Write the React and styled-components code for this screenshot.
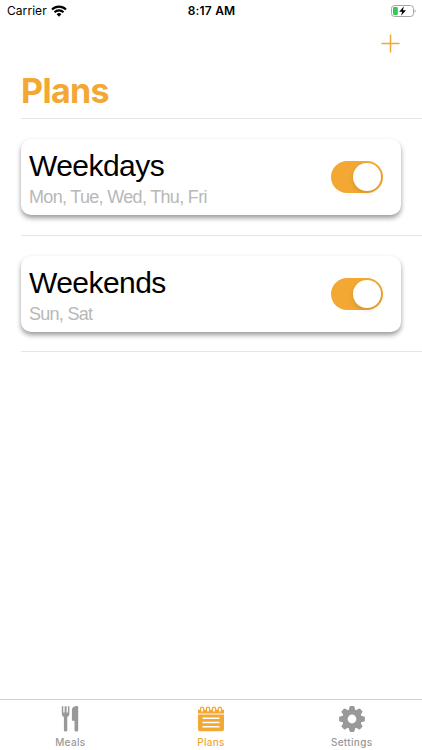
import React, { useState } from 'react';
import styled, { createGlobalStyle } from 'styled-components';

const ORANGE = '#f2a833';
const GREY = '#999999';

const GlobalStyle = createGlobalStyle`
  * { box-sizing: border-box; }
  body { margin: 0; background: #fff; }
`;

const Screen = styled.div`
  display: flex;
  flex-direction: column;
  width: 422px;
  height: 750px;
  overflow: hidden;
  background: #fff;
  font-family: Inter, 'Liberation Sans', sans-serif;
`;

const StatusBar = styled.header`
  display: grid;
  grid-template-columns: 1fr auto 1fr;
  align-items: center;
  height: 22px;
  padding: 0 6px 0 7px;
  color: #000;
`;

const Carrier = styled.div`
  display: flex;
  align-items: center;
  gap: 4px;
  font-size: 12px;
  line-height: 22px;
  letter-spacing: 0.06px;
`;

const Clock = styled.div`
  font-size: 12px;
  font-weight: 600;
  line-height: 22px;
  letter-spacing: 0.2px;
`;

const BatterySlot = styled.div`
  display: flex;
  justify-content: flex-end;
`;

const NavBar = styled.nav`
  display: flex;
  align-items: center;
  justify-content: flex-end;
  height: 43px;
  padding-right: 22px;
`;

const AddButton = styled.button`
  display: flex;
  padding: 0;
  border: 0;
  background: none;
`;

const Title = styled.h1`
  height: 54px;
  margin: 0 0 0 21px;
  border-bottom: 1px solid #e6e6e6;
  color: ${ORANGE};
  font-size: 34px;
  font-weight: 700;
  line-height: 51px;
  letter-spacing: -0.65px;
`;

const PlanList = styled.main`
  flex: 1;
  padding-left: 21px;
`;

const PlanRow = styled.section`
  height: 116.5px;
  padding: 20px 21px 20px 0;
  border-bottom: 1px solid #e6e6e6;
`;

const PlanCard = styled.div`
  display: flex;
  align-items: center;
  justify-content: space-between;
  height: 76px;
  padding: 0 18px 0 8px;
  border-radius: 10px;
  background: #fff;
  box-shadow: 0 3px 5px rgba(0, 0, 0, 0.4);
`;

const PlanText = styled.div`
  display: flex;
  flex-direction: column;
  padding-top: 6px;
  font-family: 'Liberation Sans', Arial, sans-serif;
  white-space: nowrap;
`;

const PlanName = styled.div`
  color: #000;
  font-size: 30px;
  line-height: 34px;
  letter-spacing: -0.55px;
`;

const PlanDays = styled.div`
  color: #b8b8b8;
  font-size: 18px;
  line-height: 28px;
  letter-spacing: ${(p) => p.$tracking};
`;

const Toggle = styled.button`
  display: flex;
  align-items: center;
  justify-content: ${(p) => (p.$on ? 'flex-end' : 'flex-start')};
  width: 52px;
  height: 32px;
  padding: 2px;
  border: 0;
  border-radius: 16px;
  background: ${(p) => (p.$on ? ORANGE : '#e5e5ea')};
`;

const Knob = styled.span`
  width: 28px;
  height: 28px;
  border-radius: 50%;
  background: #fff;
  box-shadow: 0 2px 5px rgba(0, 0, 0, 0.12);
`;

const TabBar = styled.footer`
  display: grid;
  grid-template-columns: repeat(3, 1fr);
  height: 51px;
  border-top: 1px solid #cfcfcf;
`;

const Tab = styled.button`
  display: flex;
  flex-direction: column;
  align-items: center;
  gap: 3px;
  padding: 6px 0 0;
  border: 0;
  background: none;
  color: ${(p) => (p.$active ? ORANGE : GREY)};
  font-family: inherit;
  font-size: 10px;
  font-weight: 500;
  line-height: 14px;
  letter-spacing: 0.32px;
`;

const WifiIcon = () => (
  <svg width="16" height="12" viewBox="0 0 16 12">
    <g fill="none" stroke="#000" strokeWidth="2.1">
      <path d="M1 4.5a10 10 0 0 1 14 0" />
      <path d="M3.5 7.2a6.4 6.4 0 0 1 9 0" />
    </g>
    <path d="M8 11.7 5.6 9.2a3.5 3.5 0 0 1 4.8 0z" />
  </svg>
);

const BatteryIcon = () => (
  <svg width="25" height="12" viewBox="0 0 25 12">
    <rect x=".5" y=".5" width="22" height="11" rx="3" fill="none" stroke="#a6a6a6" />
    <path d="M23.6 4.2v3.6q1.1-.5 1.1-1.8t-1.1-1.8" fill="#a6a6a6" />
    <rect x="2" y="2" width="4.8" height="8" rx="1.2" fill="#34c759" />
    <path d="M13 1.2 8.2 6.8h3l-1.2 4L15 5.2h-3.1z" stroke="#fff" strokeWidth="1.2" paintOrder="stroke" />
  </svg>
);

const PlusIcon = () => (
  <svg width="19" height="19" viewBox="0 0 19 19" stroke={ORANGE} strokeWidth="1.5">
    <path d="M9.5 .5v18M.5 9.5h18" />
  </svg>
);

const MealsIcon = () => (
  <svg width="26" height="26" viewBox="0 0 26 26" fill="currentColor">
    <path d="M4.8.3h1.5v6.2h1.3V.3h2v6.2h1.3V.3h1.5v7.2c0 2-.8 2.7-2.1 3.6v12.8c0 2-3.4 2-3.4 0V11.1C5.6 10.2 4.8 9.5 4.8 7.5z" />
    <path d="M21.2 1v22.9c0 2.1-3.7 2.1-3.7 0v-9.2h-2.6V4c0-2.6 2.3-3.9 5.3-3.9q1 0 1 .9z" />
  </svg>
);

const PlansIcon = () => (
  <svg width="26" height="26" viewBox="0 0 26 26">
    <path d="M0 3.7h26v3.9H0zM0 8.4h26v14.8a2 2 0 0 1-2 2H2a2 2 0 0 1-2-2z" fill="currentColor" />
    <g fill="#fff" stroke="currentColor" strokeWidth="1.3">
      <rect x="2.6" y="1.1" width="3" height="5.1" rx="1.5" />
      <rect x="8.5" y="1.1" width="3" height="5.1" rx="1.5" />
      <rect x="14.5" y="1.1" width="3" height="5.1" rx="1.5" />
      <rect x="20.4" y="1.1" width="3" height="5.1" rx="1.5" />
    </g>
    <path d="M4.5 12.3h17M4.5 16.5h17M4.5 20.7h17" stroke="#fff" strokeWidth="1.5" />
  </svg>
);

const SettingsIcon = () => (
  <svg width="26" height="26" viewBox="0 0 26 26" fill="currentColor">
    <path
      fillRule="evenodd"
      d="M13 3.2a9.8 9.8 0 1 0 0 19.6 9.8 9.8 0 0 0 0-19.6zm0 5.4a4.4 4.4 0 1 1 0 8.8 4.4 4.4 0 0 1 0-8.8z"
    />
    {[0, 45, 90, 135, 180, 225, 270, 315].map((angle) => (
      <path key={angle} transform={`rotate(${angle} 13 13)`} d="M9.5 5 10.5.9q.2-.8 1-.8h3q.8 0 1 .8L16.5 5z" />
    ))}
  </svg>
);

const PLANS = [
  { name: 'Weekdays', days: 'Mon, Tue, Wed, Thu, Fri', daysTracking: '-0.68px' },
  { name: 'Weekends', days: 'Sun, Sat', daysTracking: '-0.72px' },
];

const TABS = [
  { label: 'Meals', Icon: MealsIcon },
  { label: 'Plans', Icon: PlansIcon },
  { label: 'Settings', Icon: SettingsIcon },
];

function Plan({ plan }) {
  const [on, setOn] = useState(true);
  return (
    <PlanRow>
      <PlanCard>
        <PlanText>
          <PlanName>{plan.name}</PlanName>
          <PlanDays $tracking={plan.daysTracking}>{plan.days}</PlanDays>
        </PlanText>
        <Toggle $on={on} role="switch" aria-checked={on} aria-label={plan.name} onClick={() => setOn(!on)}>
          <Knob />
        </Toggle>
      </PlanCard>
    </PlanRow>
  );
}

export default function App() {
  const [active, setActive] = useState('Plans');
  return (
    <>
      <GlobalStyle />
      <Screen>
        <StatusBar>
          <Carrier>
            Carrier
            <WifiIcon />
          </Carrier>
          <Clock>8:17 AM</Clock>
          <BatterySlot>
            <BatteryIcon />
          </BatterySlot>
        </StatusBar>
        <NavBar>
          <AddButton aria-label="Add plan">
            <PlusIcon />
          </AddButton>
        </NavBar>
        <Title>Plans</Title>
        <PlanList>
          {PLANS.map((plan) => (
            <Plan key={plan.name} plan={plan} />
          ))}
        </PlanList>
        <TabBar>
          {TABS.map(({ label, Icon }) => (
            <Tab key={label} $active={label === active} onClick={() => setActive(label)}>
              <Icon />
              {label}
            </Tab>
          ))}
        </TabBar>
      </Screen>
    </>
  );
}
